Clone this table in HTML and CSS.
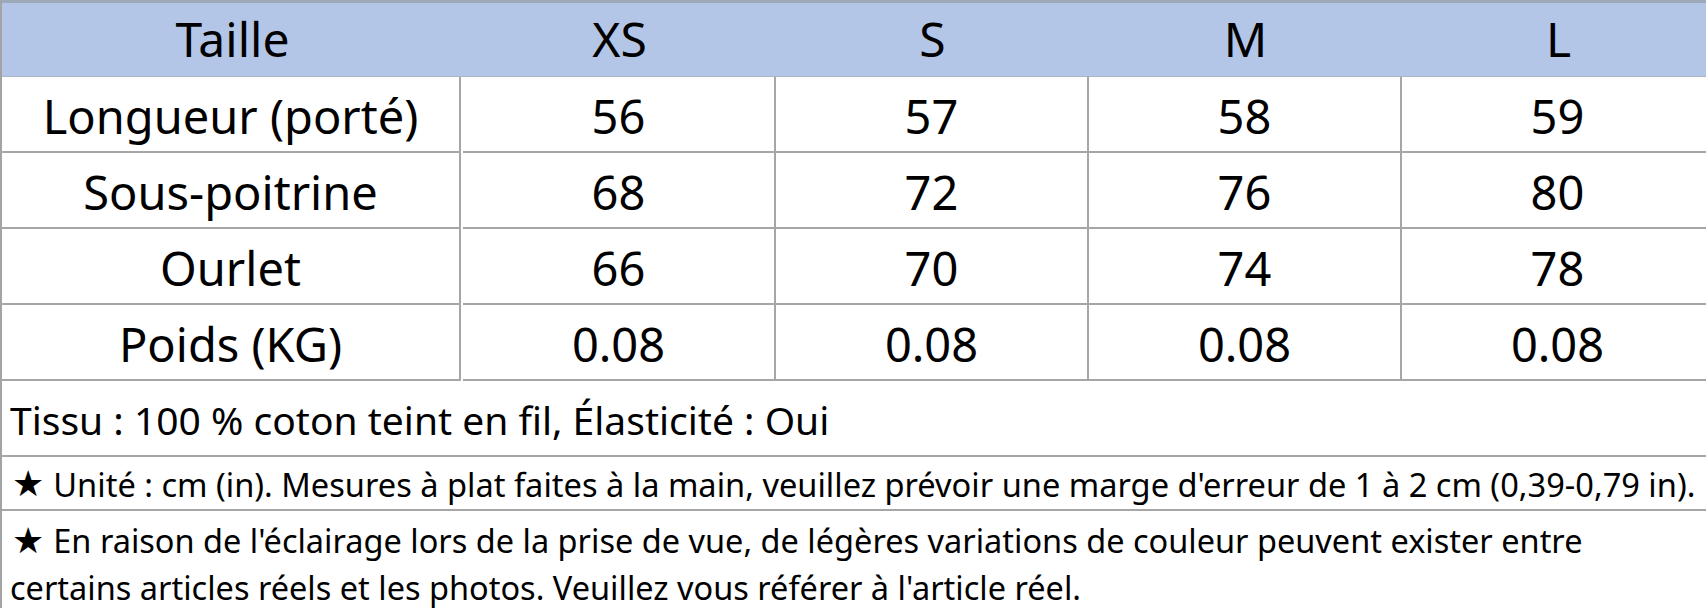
FILE: index.html
```html
<!DOCTYPE html>
<html lang="fr">
<head>
<meta charset="utf-8">
<title>Guide des tailles</title>
<link rel="stylesheet" href="styles.css">
</head>
<body>
<div class="sheet">
  <div class="head first">Taille</div>
  <div class="head">XS</div>
  <div class="head">S</div>
  <div class="head">M</div>
  <div class="head">L</div>

  <div class="cell label">Longueur (porté)</div>
  <div class="cell">56</div>
  <div class="cell">57</div>
  <div class="cell">58</div>
  <div class="cell">59</div>

  <div class="cell label">Sous-poitrine</div>
  <div class="cell">68</div>
  <div class="cell">72</div>
  <div class="cell">76</div>
  <div class="cell">80</div>

  <div class="cell label">Ourlet</div>
  <div class="cell">66</div>
  <div class="cell">70</div>
  <div class="cell">74</div>
  <div class="cell">78</div>

  <div class="cell label">Poids (KG)</div>
  <div class="cell">0.08</div>
  <div class="cell">0.08</div>
  <div class="cell">0.08</div>
  <div class="cell">0.08</div>

  <div class="note fabric">Tissu : 100 % coton teint en fil, Élasticité : Oui</div>
  <div class="note unit"><span class="star">★</span><span>Unité : cm (in). Mesures à plat faites à la main, veuillez prévoir une marge d'erreur de 1 à 2 cm (0,39-0,79 in).</span></div>
  <div class="note light"><span class="star">★</span>En raison de l'éclairage lors de la prise de vue, de légères variations de couleur peuvent exister entre<br>certains articles réels et les photos. Veuillez vous référer à l'article réel.</div>
</div>
</body>
</html>
```
FILE: styles.css
```css
html, body {
  margin: 0;
  padding: 0;
  background: #ffffff;
  overflow: hidden;
}

body {
  width: 1706px;
  height: 608px;
  font-family: "Noto Sans", "Open Sans", "DejaVu Sans", sans-serif;
  color: #000000;
}

.sheet {
  display: grid;
  grid-template-columns: 461px repeat(4, 313px);
  width: 1713px;
  border-top: 3px solid #9da8b9;
  border-left: 2px solid #a3a3a3;
  box-sizing: border-box;
}

.head {
  height: 74px;
  background: #b4c6e7;
  display: flex;
  align-items: center;
  justify-content: center;
  font-size: 48px;
  box-sizing: border-box;
  border-bottom: 1px solid #a9b4c6;
  padding-bottom: 2px;
}

.cell {
  height: 76px;
  box-sizing: border-box;
  border-right: 2px solid #a6a6a6;
  border-bottom: 2px solid #a6a6a6;
  display: flex;
  align-items: center;
  justify-content: center;
  font-size: 47px;
  padding-top: 4px;
}

.cell.label {
  width: 461px;
  margin-left: -2px;
  padding-left: 2px;
}

.note {
  grid-column: 1 / -1;
  box-sizing: border-box;
  border-bottom: 2px solid #a6a6a6;
  padding-left: 8px;
  display: flex;
  align-items: center;
}

.fabric {
  height: 76px;
  font-size: 39px;
  padding-top: 2px;
}

.unit {
  height: 54px;
  font-size: 32.6px;
  padding-top: 2px;
  white-space: nowrap;
}

.light {
  display: block;
  font-size: 32.5px;
  line-height: 47px;
  padding-top: 6px;
  height: 120px;
}

.star {
  display: inline-block;
  font-family: "DejaVu Sans", sans-serif;
  font-size: 36px;
  line-height: 1;
  margin-left: 2px;
  margin-right: 9px;
}
```
